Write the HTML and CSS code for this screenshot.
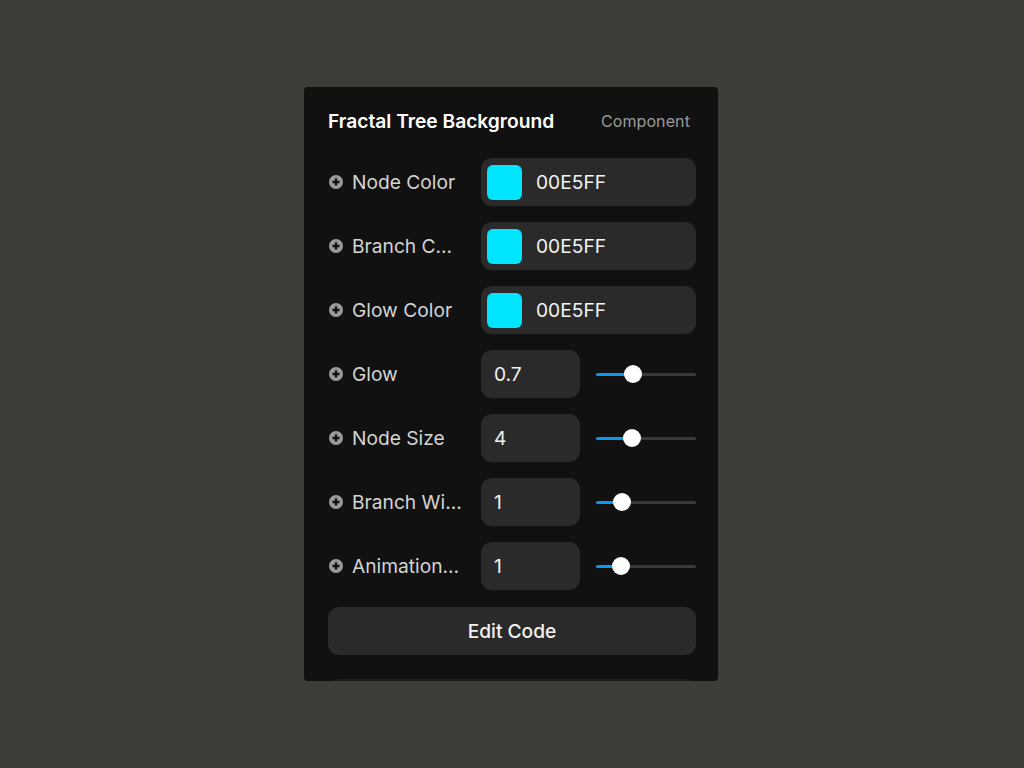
FILE: index.html
```html
<!DOCTYPE html>
<html>
<head>
<meta charset="utf-8">
<link rel="stylesheet" href="styles.css">
</head>
<body>
<div class="panel">
  <div class="header">
    <div class="title">Fractal Tree Background</div>
    <div class="kind">Component</div>
  </div>
  <div class="rows">
    <div class="row">
      <div class="label"><svg class="plus" viewBox="0 0 14 14"><circle cx="7" cy="7" r="7"/><path d="M7 3.5v7M3.5 7h7"/></svg><span>Node Color</span></div>
      <div class="field color"><span class="swatch"></span><span class="val">00E5FF</span></div>
    </div>
    <div class="row">
      <div class="label"><svg class="plus" viewBox="0 0 14 14"><circle cx="7" cy="7" r="7"/><path d="M7 3.5v7M3.5 7h7"/></svg><span>Branch Color</span></div>
      <div class="field color"><span class="swatch"></span><span class="val">00E5FF</span></div>
    </div>
    <div class="row">
      <div class="label"><svg class="plus" viewBox="0 0 14 14"><circle cx="7" cy="7" r="7"/><path d="M7 3.5v7M3.5 7h7"/></svg><span>Glow Color</span></div>
      <div class="field color"><span class="swatch"></span><span class="val">00E5FF</span></div>
    </div>
    <div class="row">
      <div class="label"><svg class="plus" viewBox="0 0 14 14"><circle cx="7" cy="7" r="7"/><path d="M7 3.5v7M3.5 7h7"/></svg><span>Glow</span></div>
      <div class="field num"><span class="val">0.7</span></div>
      <div class="slider"><div class="fill" style="width:37px"></div><div class="thumb"></div><div class="rest"></div></div>
    </div>
    <div class="row">
      <div class="label"><svg class="plus" viewBox="0 0 14 14"><circle cx="7" cy="7" r="7"/><path d="M7 3.5v7M3.5 7h7"/></svg><span>Node Size</span></div>
      <div class="field num"><span class="val">4</span></div>
      <div class="slider"><div class="fill" style="width:36px"></div><div class="thumb"></div><div class="rest"></div></div>
    </div>
    <div class="row">
      <div class="label"><svg class="plus" viewBox="0 0 14 14"><circle cx="7" cy="7" r="7"/><path d="M7 3.5v7M3.5 7h7"/></svg><span>Branch Width</span></div>
      <div class="field num"><span class="val">1</span></div>
      <div class="slider"><div class="fill" style="width:26px"></div><div class="thumb"></div><div class="rest"></div></div>
    </div>
    <div class="row">
      <div class="label"><svg class="plus" viewBox="0 0 14 14"><circle cx="7" cy="7" r="7"/><path d="M7 3.5v7M3.5 7h7"/></svg><span>Animation Speed</span></div>
      <div class="field num"><span class="val">1</span></div>
      <div class="slider"><div class="fill" style="width:25px"></div><div class="thumb"></div><div class="rest"></div></div>
    </div>
  </div>
  <button class="edit">Edit Code</button>
  <div class="next"></div>
</div>
</body>
</html>
```
FILE: styles.css
```css
html, body {
  margin: 0;
  height: 100%;
}
body {
  background: #3d3d38;
  font-family: Inter, "Noto Sans", sans-serif;
}
.panel {
  margin: 87px 0 0 304px;
  width: 414px;
  height: 594px;
  box-sizing: border-box;
  background: #111111;
  border-radius: 4px;
  padding: 21px 22px 0 24px;
  overflow: hidden;
  display: flex;
  flex-direction: column;
}
.panel > * {
  flex: none;
}
.header {
  display: flex;
  justify-content: space-between;
  align-items: center;
  height: 26px;
  margin-bottom: 24px;
  margin-right: 6px;
}
.title {
  color: #ffffff;
  font-size: 19.2px;
  font-weight: 600;
}
.kind {
  color: #9a9a9a;
  font-size: 16px;
  letter-spacing: 0.1px;
}
.rows {
  display: flex;
  flex-direction: column;
  gap: 16px;
}
.row {
  display: flex;
  align-items: center;
  height: 48px;
}
.label {
  width: 153px;
  display: flex;
  align-items: center;
  gap: 9px;
  color: #d4d4d4;
  font-size: 19.2px;
  flex: none;
}
.label span {
  width: 111.5px;
  white-space: nowrap;
  overflow: hidden;
  text-overflow: ellipsis;
}
.plus {
  width: 14px;
  height: 14px;
  margin-left: 1px;
  flex: none;
}
.plus circle { fill: #9a9a9a; }
.plus path { stroke: #111; stroke-width: 2.4; fill: none; }
.field {
  height: 48px;
  box-sizing: border-box;
  background: #2a2a2a;
  border-radius: 11px;
  display: flex;
  align-items: center;
  color: #f2f2f2;
  font-size: 19.2px;
  flex: none;
}
.field.color {
  width: 215px;
  padding-left: 6px;
  gap: 14px;
}
.swatch {
  width: 35px;
  height: 35px;
  border-radius: 6px;
  background: #00e5ff;
}
.field.num {
  width: 99px;
  padding-left: 13px;
}
.slider {
  margin-left: 16px;
  width: 100px;
  display: flex;
  align-items: center;
}
.fill {
  height: 3px;
  background: #0a99ee;
  border-radius: 2px 0 0 2px;
  margin-right: -9px;
}
.thumb {
  width: 18px;
  height: 18px;
  border-radius: 50%;
  background: #ffffff;
  position: relative;
  z-index: 1;
  flex: none;
}
.rest {
  flex: 1;
  height: 3px;
  background: #3a3a3a;
  border-radius: 0 2px 2px 0;
  margin-left: -9px;
}
.edit {
  margin-top: 17px;
  height: 48px;
  width: 368px;
  border: none;
  border-radius: 11px;
  background: #2a2a2a;
  color: #f2f2f2;
  font-family: inherit;
  font-size: 19.2px;
  font-weight: 500;
}
.next {
  margin-top: 24px;
  width: 368px;
  height: 30px;
  background: #1c1c1c;
  border-radius: 11px;
}
```
